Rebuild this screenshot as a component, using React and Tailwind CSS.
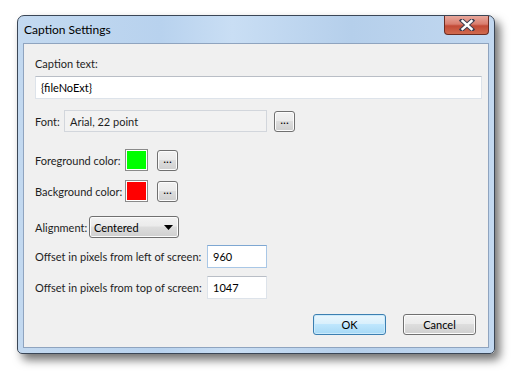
import React from 'react';

// Caption Settings dialog (Windows 7 look)

const font = { fontFamily: 'Lato, "Noto Sans", "DejaVu Sans", sans-serif' };

const Button = ({ children, className = '', primary = false }) => (
  <div
    className={`flex items-center rounded-[3px] border text-[11px] text-black ${
      primary
        ? 'border-[#3c7fb1] bg-[linear-gradient(#eaf6fd_0%,#d9f0fc_45%,#bee6fd_50%,#a7d9f5_100%)] shadow-[inset_0_0_0_1px_#cbeafb]'
        : 'border-[#707070] bg-[linear-gradient(#f2f2f2_0%,#ebebeb_45%,#dddddd_50%,#cfcfcf_100%)] shadow-[inset_0_0_0_1px_#fcfcfc]'
    } ${className}`}
  >
    {children}
  </div>
);

const TextBox = ({ value, className = '', focused = false }) => (
  <div
    className={`flex items-center bg-white border text-[11px] text-black pl-[5px] ${
      focused ? 'border-[#a9c7e6] border-t-[#7ea7d2]' : 'border-[#dde3ea] border-t-[#b9bec6]'
    } ${className}`}
  >
    {value}
  </div>
);

const Ellipsis = () => (
  <Button className="justify-center w-[21px] h-[21px] leading-none pb-[3px] text-[12px]">...</Button>
);

const ColorRow = ({ label, color }) => (
  <div className="flex items-center h-[22px]">
    <span className="w-[90px] shrink-0">{label}</span>
    <div className="w-[23px] h-[22px] border border-[#8a8a8a] p-px bg-white">
      <div className={`w-full h-full ${color}`} />
    </div>
    <div className="ml-[9px]">
      <Ellipsis />
    </div>
  </div>
);

export default function App() {
  return (
    <div className="w-[518px] h-[376px] bg-white pt-[15px] pl-[17px]" style={font}>
      <div className="w-[478px] h-[339px] rounded-t-[7px] rounded-b-[5px] border border-[#3a4656] bg-[linear-gradient(90deg,#c3d9f0_0%,#b8d2ee_30%,#c9def4_45%,#b5cfeb_70%,#c2d8f0_100%)] shadow-[5px_6px_10px_rgba(0,0,0,0.55)] flex flex-col">
        {/* Title bar */}
        <div className="h-[27px] flex items-start relative">
          <span className="pl-[6px] pt-[6px] text-[12px] text-black leading-[16px]">Caption Settings</span>
          <div className="absolute right-[5px] top-0 w-[45px] h-[19px] rounded-b-[4px] border border-t-0 border-[#6b2c22] bg-[linear-gradient(#e8a79b_0%,#d97d6e_45%,#c24a36_55%,#d06a4e_100%)] flex items-center justify-center">
            <svg width="16" height="12" viewBox="0 0 16 12">
              <path d="M3 1.5 L13 10.5 M13 1.5 L3 10.5" stroke="#3c3c50" strokeWidth="4.4" strokeLinecap="square" />
              <path d="M3.5 2 L12.5 10 M12.5 2 L3.5 10" stroke="#ffffff" strokeWidth="2.4" strokeLinecap="square" />
            </svg>
          </div>
        </div>

        {/* Client area */}
        <div className="mx-[5px] mb-[5px] flex-1 border border-[#8fa4bf] bg-[#f0f0f0] text-[11px] text-[#1e1e1e] leading-[15px] pl-[11px] pr-[8px] pt-[12px] flex flex-col whitespace-nowrap">
          <span>Caption text:</span>
          <TextBox value="{fileNoExt}" className="mt-[5px] h-[23px] w-[447px]" />

          <div className="mt-[11px] flex items-center h-[22px]">
            <span className="w-[29px] shrink-0">Font:</span>
            <div className="w-[203px] h-[22px] border border-[#d2d6dc] bg-[#f2f2f2] flex items-center pl-[5px]">
              Arial, 22 point
            </div>
            <div className="ml-[7px]">
              <Ellipsis />
            </div>
          </div>

          <div className="mt-[17px]">
            <ColorRow label="Foreground color:" color="bg-[#00ff00]" />
          </div>
          <div className="mt-[9px]">
            <ColorRow label="Background color:" color="bg-[#ff0000]" />
          </div>

          <div className="mt-[14px] flex items-center h-[22px]">
            <span className="w-[54px] shrink-0">Alignment:</span>
            <Button className="w-[90px] h-[22px] justify-between px-[3px]">
              <span className="pl-[1px]">Centered</span>
              <svg width="9" height="5" viewBox="0 0 9 5" className="mr-[2px]">
                <path d="M0 0 H9 L4.5 5 Z" fill="#000" />
              </svg>
            </Button>
          </div>

          <div className="mt-[7px] flex items-center h-[23px]">
            <span className="w-[172px] shrink-0">Offset in pixels from left of screen:</span>
            <TextBox value="960" focused className="w-[60px] h-[23px]" />
          </div>
          <div className="mt-[8px] flex items-center h-[23px]">
            <span className="w-[172px] shrink-0">Offset in pixels from top of screen:</span>
            <TextBox value="1047" className="w-[60px] h-[23px]" />
          </div>

          <div className="mt-[15px] flex justify-end gap-[17px] pr-[4px]">
            <Button primary className="justify-center w-[73px] h-[21px]">OK</Button>
            <Button className="justify-center w-[73px] h-[21px]">Cancel</Button>
          </div>
        </div>
      </div>
    </div>
  );
}
